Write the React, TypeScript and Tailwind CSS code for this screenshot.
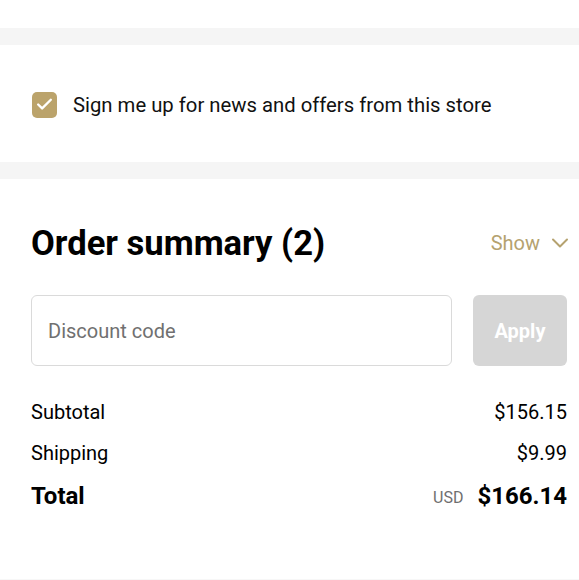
import React from 'react';
import { Check, ChevronDown } from 'lucide-react';

const App = () => {
    return (
        <div className="w-[579px] h-[580px] bg-white overflow-hidden font-['Roboto',sans-serif] text-black flex flex-col">
            <div className="h-[28px]" />
            <div className="h-[17px] bg-[#f5f5f5]" />

            {/* Newsletter opt-in */}
            <div className="h-[117px] px-[32px] flex items-center">
                <label className="flex items-center gap-[16px] pt-[2px]">
                    <span className="w-[25px] h-[26px] rounded-[5px] bg-[#bba36b] flex items-center justify-center">
                        <Check className="w-[19px] h-[19px] text-white" strokeWidth={3} />
                    </span>
                    <span className="text-[20.3px] leading-[28px] text-[#111]">Sign me up for news and offers from this store</span>
                </label>
            </div>

            <div className="h-[17px] bg-[#f5f5f5]" />

            {/* Order summary */}
            <div className="flex-1 px-[31px] pt-[44px] border-b border-[#f7f7f7]">
                <div className="flex items-center justify-between h-[40px]">
                    <h2 className="text-[34.6px] leading-[40px] font-bold">Order summary (2)</h2>
                    <button className="flex items-center gap-[6px] text-[20px] text-[#b5a26f] -mr-[26px]">
                        Show
                        <ChevronDown className="w-[28px] h-[28px]" strokeWidth={1.7} />
                    </button>
                </div>

                <div className="flex gap-[21px] mt-[32px] -mr-[19px]">
                    <input
                        className="flex-1 h-[71px] rounded-[6px] border border-[#dadada] px-[16px] text-[20px] placeholder:text-[#707070] outline-none"
                        placeholder="Discount code"
                    />
                    <button className="w-[94px] h-[71px] rounded-[6px] bg-[#d6d6d6] text-white text-[20px] font-bold">Apply</button>
                </div>

                <div className="mt-[32px] -mr-[19px] flex flex-col gap-[13px]">
                    <div className="flex justify-between text-[20px] leading-[28px]">
                        <span>Subtotal</span>
                        <span>$156.15</span>
                    </div>
                    <div className="flex justify-between text-[20px] leading-[28px]">
                        <span>Shipping</span>
                        <span>$9.99</span>
                    </div>
                    <div className="flex justify-between items-center h-[32px]">
                        <span className="text-[24px] font-bold">Total</span>
                        <span className="flex items-center gap-[14px]">
                            <span className="text-[16px] text-[#6f6f6f] pt-[4px]">USD</span>
                            <span className="text-[24px] font-bold">$166.14</span>
                        </span>
                    </div>
                </div>
            </div>
        </div>
    );
};

export default App;
